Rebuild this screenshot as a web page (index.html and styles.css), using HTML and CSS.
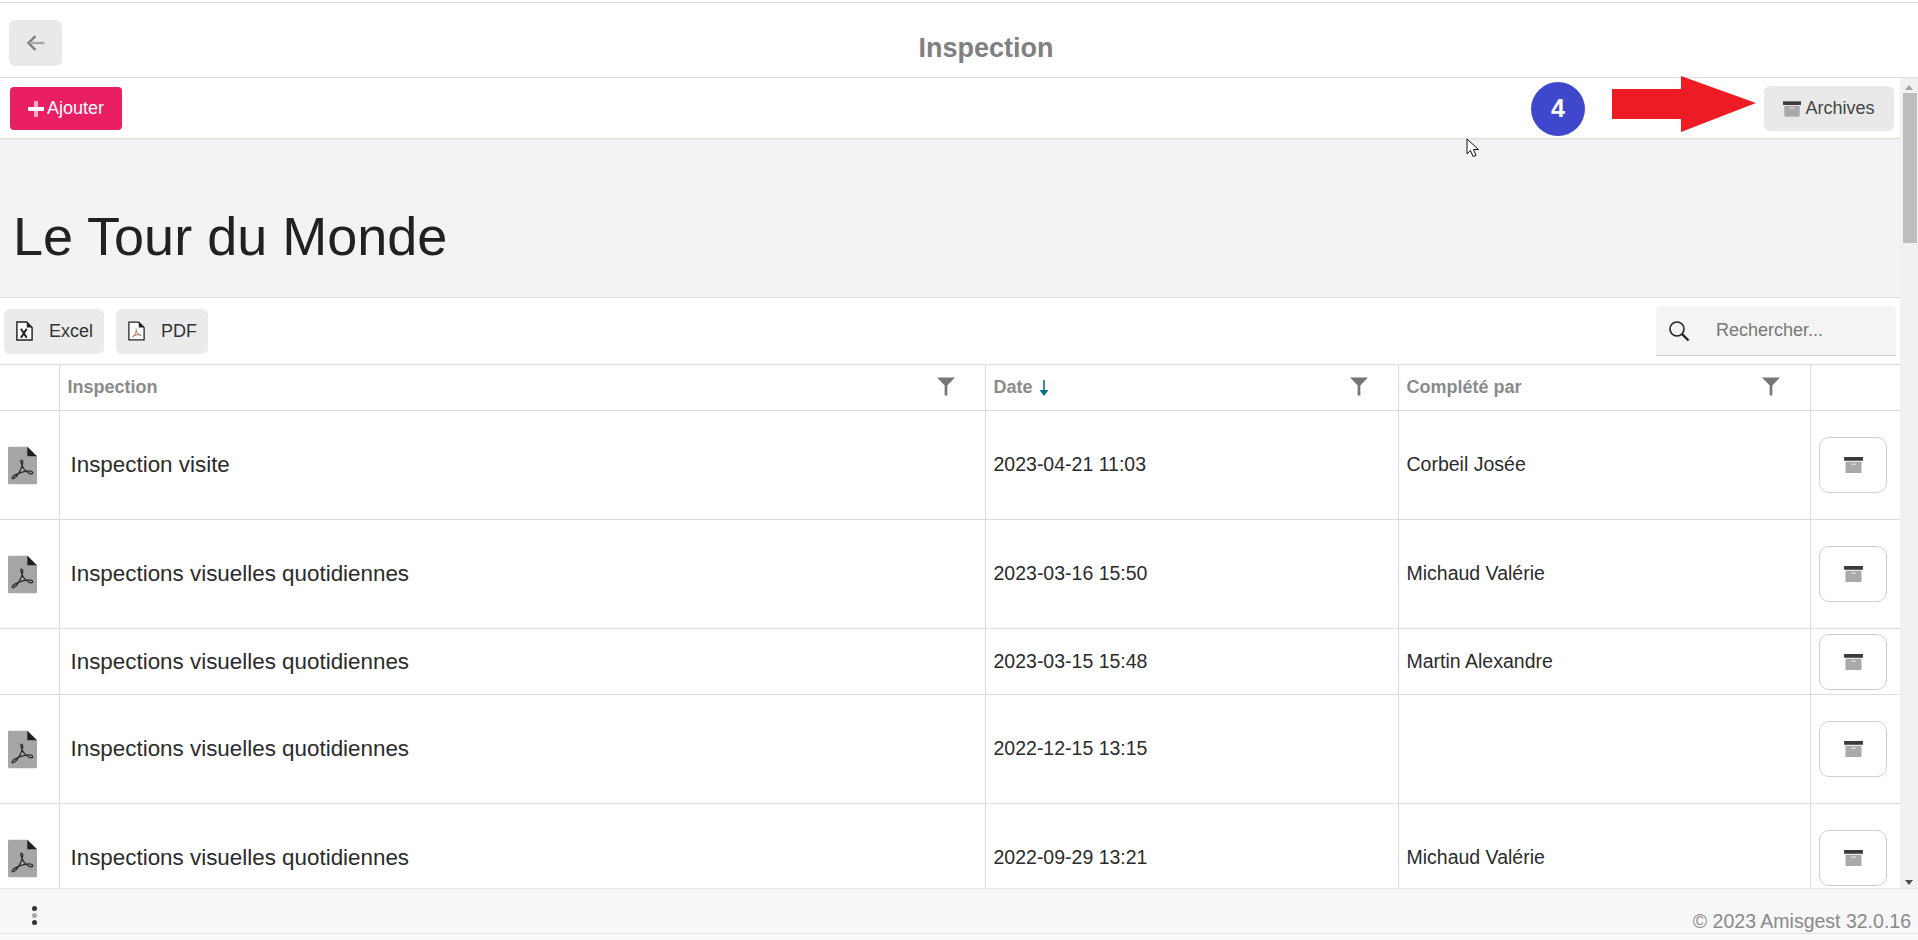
FILE: index.html
```html
<!DOCTYPE html>
<html lang="fr">
<head>
<meta charset="utf-8">
<title>Inspection</title>
<link rel="stylesheet" href="styles.css">
</head>
<body>
<svg class="defs" width="0" height="0" aria-hidden="true">
  <defs>
    <symbol id="archive" viewBox="0 0 20 17">
      <rect x="0" y="0" width="20" height="4" fill="#3a3a3a"/>
      <path d="M1.500 5h17v12h-17z" fill="#a9a9a9"/>
      <rect x="7.500" y="7" width="5" height="1.200" fill="#e8e8e8"/>
    </symbol>
    <symbol id="funnel" viewBox="0 0 20 20">
      <path d="M0 0h20l-8.500 9v11h-3v-11z" fill="#767676"/>
    </symbol>
    <symbol id="pdffile" viewBox="0 0 30 39">
      <path d="M1 0h19l10 10v28l-1 1H1l-1-1V1z" fill="#a6a6a6"/>
      <path d="M20 0l10 10H20z" fill="#1f1f1f"/>
      <path d="M13 15c1-2 3-1 2 3-1 5-5 13-9 15-3 1-2-2 2-4 6-3 14-5 17-3 2 2-1 3-4 1-4-2-7-8-8-12z" fill="none" stroke="#2a2a2a" stroke-width="1.300"/>
    </symbol>
  </defs>
</svg>
<div class="page">
  <div class="topline"></div>
  <header class="header">
    <button class="back" aria-label="Retour">
      <svg width="18" height="16" viewBox="0 0 18 16"><path d="M8.500 1L1.500 8l7 7" fill="none" stroke="#7d7d7d" stroke-width="2.400"/><path d="M2 8h15.500" stroke="#a8a8a8" stroke-width="2.400"/></svg>
    </button>
    <h1 class="title">Inspection</h1>
  </header>
  <div class="body">
    <main class="scroll">
      <div class="toolbar">
        <button class="add"><svg width="16" height="16" viewBox="0 0 16 16"><rect x="6" y="0" width="4" height="16" fill="#f6a9c4"/><rect x="0" y="6" width="16" height="4" fill="#fff"/></svg>Ajouter</button>
        <button class="archives"><svg class="arch-ic" width="18" height="16"><use href="#archive"/></svg>Archives</button>
      </div>
      <section class="hero"><h2>Le Tour du Monde</h2></section>
      <section class="card">
        <div class="cardbar">
          <button class="export excel">
            <svg width="19" height="22" viewBox="0 0 19 22"><path d="M1 1h11l6 6v14H1z" fill="#fff" stroke="#222" stroke-width="1.600"/><path d="M12 1l6 6h-6z" fill="#222"/><path d="M5.500 8.500l6.500 10M12 8.500l-6.500 10" stroke="#222" stroke-width="2.200"/></svg>
            Excel</button>
          <button class="export pdf">
            <svg width="19" height="22" viewBox="0 0 19 22"><path d="M1 1h11l6 6v14H1z" fill="#fff" stroke="#222" stroke-width="1.400"/><path d="M12 1l6 6h-6z" fill="#222"/><path d="M9 8c1 3-1 8-4 10M9 11c1 2 3 5 6 5M5 17c3-2 7-2 9-2" fill="none" stroke="#a8705f" stroke-width="1.100"/></svg>
            PDF</button>
          <div class="search">
            <svg width="22" height="22" viewBox="0 0 22 22"><circle cx="9" cy="9" r="7" fill="none" stroke="#222" stroke-width="1.600"/><path d="M14 14l6.500 6.500" stroke="#222" stroke-width="2.400"/></svg>
            <span>Rechercher...</span>
          </div>
        </div>
        <table class="grid">
          <colgroup><col class="c0"><col class="c1"><col class="c2"><col class="c3"><col class="c4"></colgroup>
          <thead>
            <tr>
              <th></th>
              <th><div class="th">Inspection<svg class="fn"><use href="#funnel"/></svg></div></th>
              <th><div class="th"><span class="sorted">Date<svg class="sort" width="10" height="16" viewBox="0 0 10 16"><path d="M5 0v11" stroke="#0a6f8c" stroke-width="1.600"/><path d="M0.500 10h9L5 16z" fill="#0a6f8c"/></svg></span><svg class="fn"><use href="#funnel"/></svg></div></th>
              <th><div class="th">Complété par<svg class="fn"><use href="#funnel"/></svg></div></th>
              <th></th>
            </tr>
          </thead>
          <tbody>
            <tr class="tall">
              <td class="ic"><svg class="pdfi"><use href="#pdffile"/></svg></td>
              <td class="name">Inspection visite</td><td>2023-04-21 11:03</td><td>Corbeil Josée</td>
              <td class="act"><button class="rowbtn"><svg width="19" height="16"><use href="#archive"/></svg></button></td>
            </tr>
            <tr class="tall">
              <td class="ic"><svg class="pdfi"><use href="#pdffile"/></svg></td>
              <td class="name">Inspections visuelles quotidiennes</td><td>2023-03-16 15:50</td><td>Michaud Valérie</td>
              <td class="act"><button class="rowbtn"><svg width="19" height="16"><use href="#archive"/></svg></button></td>
            </tr>
            <tr class="short">
              <td class="ic"></td>
              <td class="name">Inspections visuelles quotidiennes</td><td>2023-03-15 15:48</td><td>Martin Alexandre</td>
              <td class="act"><button class="rowbtn"><svg width="19" height="16"><use href="#archive"/></svg></button></td>
            </tr>
            <tr class="tall">
              <td class="ic"><svg class="pdfi"><use href="#pdffile"/></svg></td>
              <td class="name">Inspections visuelles quotidiennes</td><td>2022-12-15 13:15</td><td></td>
              <td class="act"><button class="rowbtn"><svg width="19" height="16"><use href="#archive"/></svg></button></td>
            </tr>
            <tr class="tall">
              <td class="ic"><svg class="pdfi"><use href="#pdffile"/></svg></td>
              <td class="name">Inspections visuelles quotidiennes</td><td>2022-09-29 13:21</td><td>Michaud Valérie</td>
              <td class="act"><button class="rowbtn"><svg width="19" height="16"><use href="#archive"/></svg></button></td>
            </tr>
          </tbody>
        </table>
      </section>
    </main>
    <div class="scrollbar" aria-hidden="true">
      <span class="sb-up"></span>
      <span class="sb-thumb"></span>
      <span class="sb-down"></span>
    </div>
  </div>
  <footer class="footer">
    <span class="dots"><i></i><i class="mid"></i><i></i></span>
    <span class="copy">© 2023 Amisgest 32.0.16</span>
  </footer>
</div>
<div class="badge">4</div>
<svg class="arrow" width="146" height="58" viewBox="0 0 146 58"><path d="M1 13h69V0l75 27-75 29V43H1z" fill="#ed1c24"/></svg>
<svg class="cursor" width="13" height="20" viewBox="0 0 13 20"><path d="M1 1v15l3.500-3.500 2.500 6 3-1.200-2.500-5.800h5z" fill="#fff" stroke="#111" stroke-width="1"/></svg>
</body>
</html>
```
FILE: styles.css
```css
* { box-sizing: border-box; }
html, body { margin: 0; height: 100%; overflow: hidden; }
body { font-family: "Liberation Sans", Arial, sans-serif; background: #fff; color: #222; position: relative; }
button { font-family: inherit; border: 0; cursor: pointer; }
.defs { position: absolute; }
.page { height: 940px; display: flex; flex-direction: column; background: #fafafa; }
.topline { height: 3px; background: #fff; border-bottom: 1px solid #dcdcdc; flex: none; }
.header { height: 75px; flex: none; background: #fff; border-bottom: 1px solid #dcdcdc; display: flex; align-items: center; padding-left: 9px; position: relative; }
.back { width: 53px; height: 46px; margin-top: 6px; background: #e9e9e9; border-radius: 6px; display: flex; align-items: center; justify-content: center; padding: 0; }
.title { position: absolute; left: 54px; right: 0; top: 29px; margin: 0; text-align: center; font-size: 27px; line-height: 32px; font-weight: 700; color: #808080; }
.body { height: 810px; flex: none; display: flex; }
.scroll { flex: 1; min-width: 0; overflow: hidden; background: #f3f3f5; }
.toolbar { height: 61px; background: #fff; border-bottom: 1px solid #dfdfdf; box-shadow: 0 1px 2px rgba(0,0,0,.05); display: flex; align-items: center; justify-content: space-between; padding: 1px 6px 0 10px; }
.add { width: 112px; height: 43px; background: #e91e63; color: #fff; border-radius: 4px; font-size: 18px; display: flex; align-items: center; justify-content: center; gap: 3px; padding: 0; }
.archives { width: 130px; height: 45px; background: #e9e9e9; color: #444; border-radius: 6px; font-size: 18px; display: flex; align-items: center; justify-content: center; gap: 4px; padding: 0; }
.hero { height: 158px; padding: 64px 0 0 13px; }
.hero h2 { margin: 0; font-size: 54px; line-height: 66px; font-weight: 400; color: #212121; }
.card { background: #fff; border-top: 1px solid #dcdcdc; }
.cardbar { height: 66px; display: flex; align-items: center; padding: 0 4px; }
.export { height: 45px; background: #ebebeb; border-radius: 6px; color: #333; font-size: 18px; display: flex; align-items: center; padding: 0 11px 0 12px; gap: 16px; }
.excel { width: 100px; }
.pdf { width: 92px; margin-left: 12px; }
.search { margin-left: auto; width: 240px; height: 50px; background: #f4f4f4; border-bottom: 1px solid #cfcfcf; border-radius: 5px 5px 0 0; display: flex; align-items: center; gap: 26px; padding-left: 12px; color: #777; font-size: 18px; }
.grid { width: 100%; border-collapse: collapse; table-layout: fixed; border-top: 1px solid #dcdcdc; }
.c0 { width: 59px; } .c1 { width: 926px; } .c2 { width: 413px; } .c3 { width: 412px; } .c4 { width: 90px; }
.grid th, .grid td { border: 1px solid #dcdcdc; padding: 0; }
.grid tr > :first-child { border-left: 0; }
.grid tr > :last-child { border-right: 0; }
.grid thead tr { height: 46px; }
.th { display: flex; align-items: center; justify-content: space-between; padding: 0 30px 0 8px; font-size: 18px; font-weight: 700; color: #8a8a8a; text-align: left; }
.sorted { display: inline-flex; align-items: center; gap: 6px; }
.fn { width: 18px; height: 19px; margin-top: -3px; }
.tall { height: 109px; }
.short { height: 66px; }
.grid td { font-size: 19.500px; color: #2b2b2b; padding: 0 0 1px 8px; }
.grid td.name { font-size: 22.400px; padding: 0 0 0 11px; }
.grid td.ic { padding: 1px 0 0 8px; }
.grid td.act { padding: 0; text-align: center; }
.pdfi { display: block; width: 29px; height: 39px; }
.rowbtn { display: inline-flex; align-items: center; justify-content: center; width: 68px; height: 56px; background: #fff; border: 1px solid #cfcfcf; border-radius: 10px; padding: 0; vertical-align: middle; margin-left: -4px; }
.scrollbar { width: 18px; flex: none; background: #f1f1f1; display: flex; flex-direction: column; align-items: center; }
.sb-up { width: 0; height: 0; border: 4px solid transparent; border-top: 0; border-bottom: 5px solid #a3a3a3; margin-top: 7px; }
.sb-thumb { width: 14px; height: 150px; background: #bdbdbd; margin-top: 3px; margin-left: 1px; }
.sb-down { width: 0; height: 0; border: 4px solid transparent; border-bottom: 0; border-top: 5px solid #505050; margin-top: auto; margin-bottom: 3px; }
.footer { height: 46px; flex: none; background: #f7f7f7; border-top: 1px solid #e6e6e6; border-bottom: 1px solid #e3e3e3; display: flex; align-items: center; justify-content: space-between; padding: 0 7px 0 32px; }
.dots { display: flex; flex-direction: column; gap: 2px; margin-top: 8px; }
.dots i { width: 5px; height: 5px; border-radius: 50%; background: #333; display: block; }
.dots i.mid { background: #aaa; }
.copy { font-size: 19.500px; color: #8a8a8a; margin-top: 20px; }
.badge { position: absolute; left: 1531px; top: 82px; width: 54px; height: 54px; border-radius: 50%; background: #3f48cc; color: #fff; font-size: 25px; font-weight: 700; text-align: center; line-height: 52px; }
.arrow { position: absolute; left: 1611px; top: 76px; }
.cursor { position: absolute; left: 1466px; top: 138px; }
```
